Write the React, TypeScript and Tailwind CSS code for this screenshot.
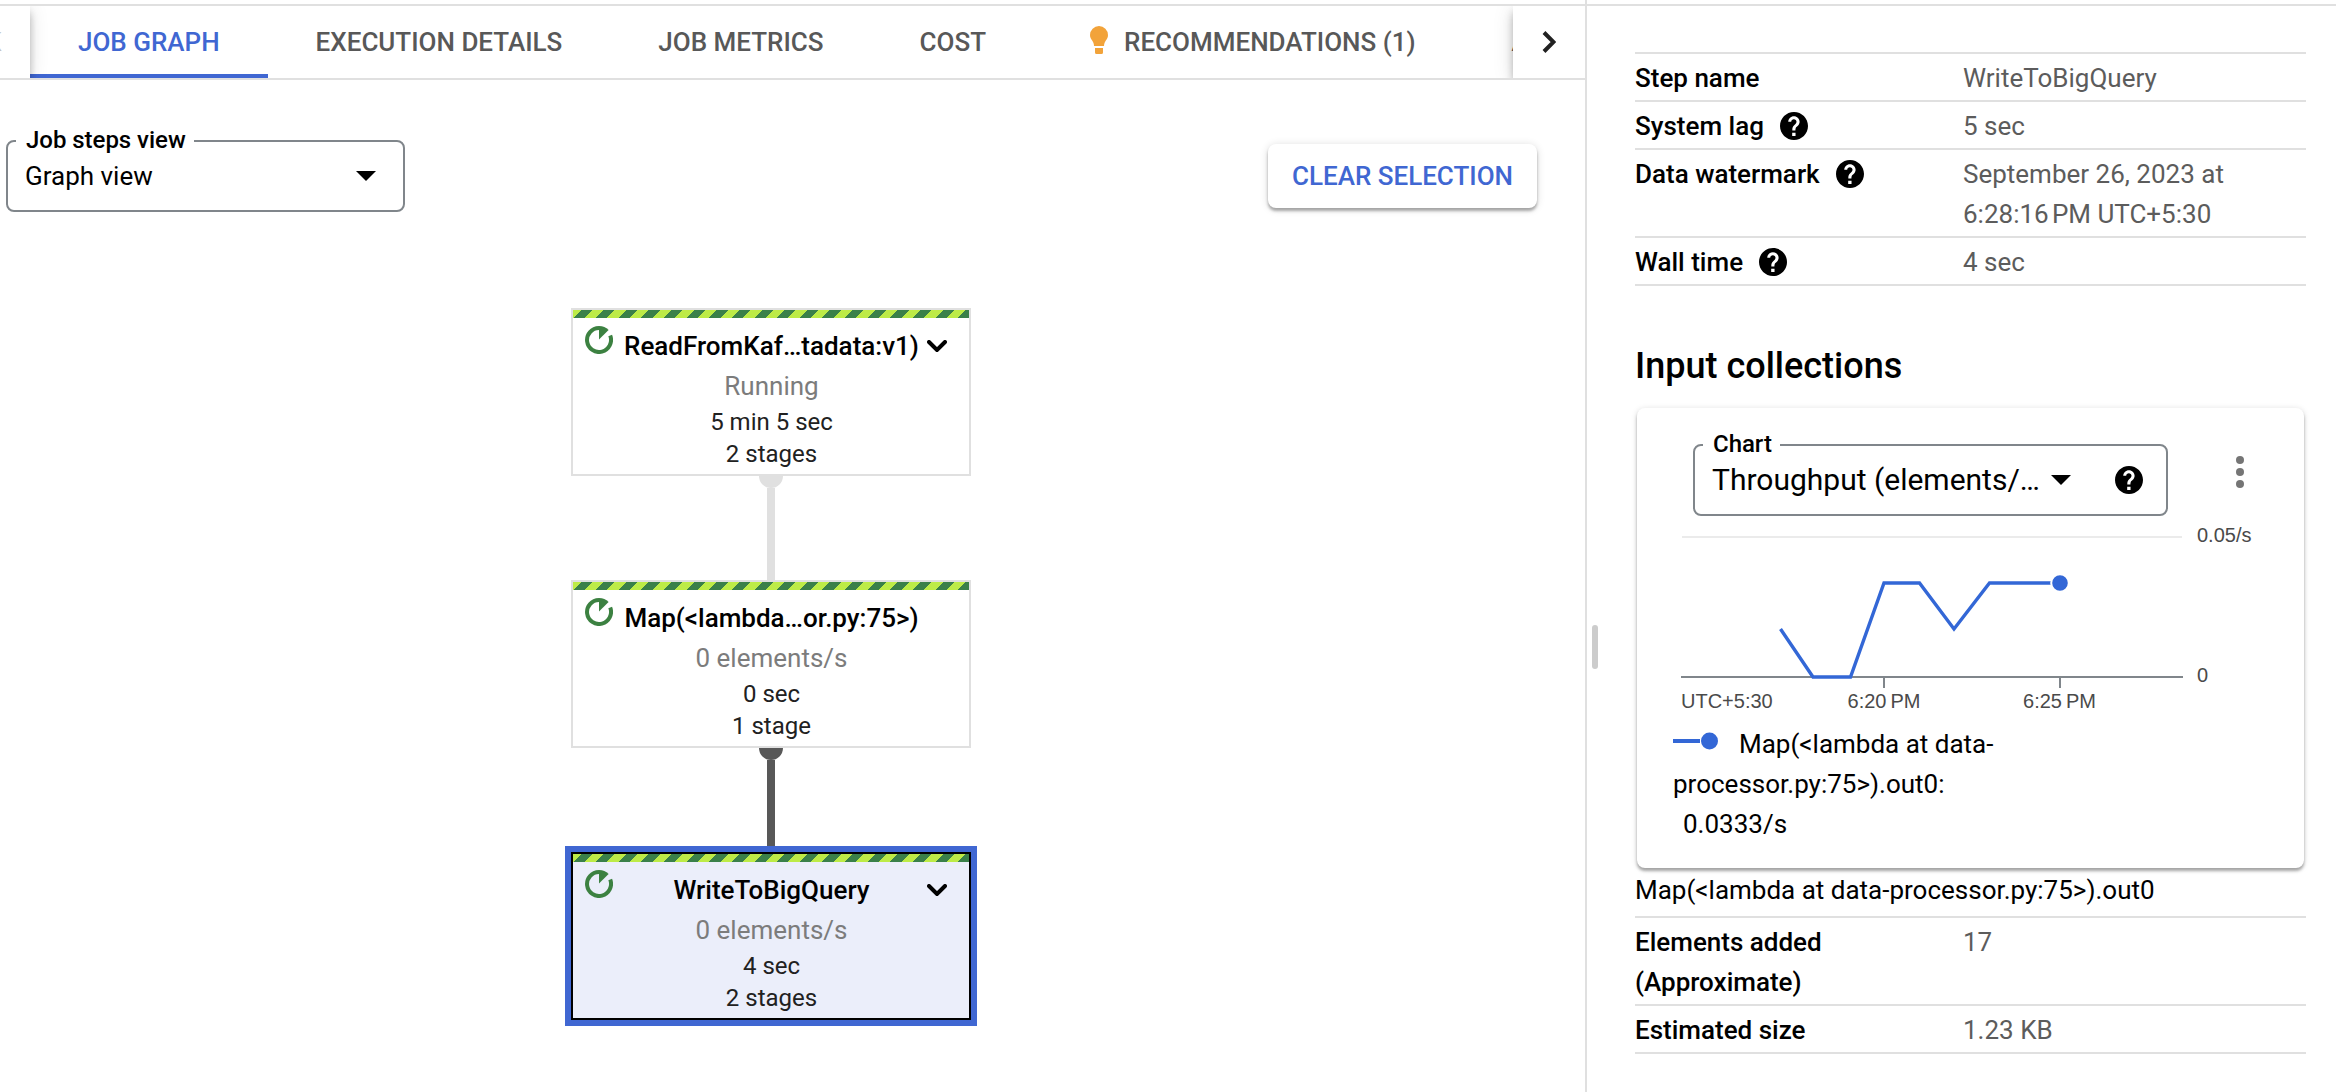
import React from "react";

const HelpIcon = ({ className = "" }: { className?: string }) => (
  <svg viewBox="2 2 20 20" className={`size-7 shrink-0 ${className}`} fill="#000">
    <path d="M12 2C6.48 2 2 6.48 2 12s4.48 10 10 10 10-4.48 10-10S17.52 2 12 2zm1.100 17.200h-2.400v-2.400h2.400v2.400zm2-7.750-.9.92C13.45 12.9 13 13.5 13 15.200h-2.200v-.7c0-1.1.45-2.1 1.17-2.83l1.24-1.26c.37-.36.59-.86.59-1.41 0-1.1-.9-1.800-1.900-1.800s-1.900.7-1.900 1.800H7.900c0-2.21 1.79-4 4.050-4s4.050 1.79 4.050 4c0 .88-.36 1.78-.9 2.45z" />
  </svg>
);

const Caret = ({ className = "" }: { className?: string }) => (
  <svg viewBox="0 0 20 10" className={`h-2.5 w-5 shrink-0 ${className}`}>
    <path d="M0 0h20L10 10z" fill="#000" />
  </svg>
);

const RunningIcon = () => (
  <svg viewBox="0 0 28 28" className="absolute left-3 top-4 size-7">
    <path d="M14 2A12 12 0 1 0 25.2 9.6" fill="none" stroke="#3c8141" strokeWidth="4" />
    <path d="M14 0C18 0 21 1.500 23.600 4L14 13.500z" fill="#3c8141" />
  </svg>
);

type Step = {
  name: string;
  rate: string;
  time: string;
  stages: string;
  expandable?: boolean;
  selected?: boolean;
};

const StepNode = ({ step }: { step: Step }) => (
  <div
    className={`relative h-[168px] w-[400px] border-2 text-center ${
      step.selected
        ? "border-black bg-[#ebeefa] shadow-[0_0_0_6px_#4067d2]"
        : "border-[#e0e0e0] bg-white"
    }`}
  >
    <div className="h-2 bg-[repeating-linear-gradient(-45deg,#3a8049_0px,#3a8049_8px,#bdeb47_8px,#bdeb47_16px)]" />
    <RunningIcon />
    {step.expandable && (
      <svg viewBox="0 0 20 12" className="absolute left-[354px] top-[30px] h-3 w-5">
        <path d="M2 2l8 8 8-8" fill="none" stroke="#000" strokeWidth="4" strokeLinecap="round" />
      </svg>
    )}
    <div className="mt-2 h-10 pl-px text-[26px]/10 font-medium text-black">{step.name}</div>
    <div className="h-10 pl-px text-[26px]/10 text-[#7c7c7c]">{step.rate}</div>
    <div className="h-8 pl-px text-[24px]/8 text-[#212121]">{step.time}</div>
    <div className="h-8 pl-px text-[24px]/8 text-[#212121]">{step.stages}</div>
  </div>
);

const Edge = ({ active = false }: { active?: boolean }) => (
  <div className="flex h-[104px] flex-col items-center">
    <div className={`h-3 w-6 rounded-b-full ${active ? "bg-[#585858]" : "bg-[#e0e0e0]"}`} />
    <div className={`w-2 flex-1 ${active ? "bg-[#585858]" : "bg-[#e0e0e0]"}`} />
  </div>
);

const Tab = ({ active = false, children }: { active?: boolean; children: React.ReactNode }) => (
  <div
    className={`flex h-full shrink-0 items-center whitespace-nowrap border-b-4 px-12 pt-1 text-[26px] font-medium ${
      active ? "border-[#4067d2] text-[#4067d2]" : "border-transparent text-[#585858]"
    }`}
  >
    {children}
  </div>
);

const Row = ({ label, help = false, children }: { label: string; help?: boolean; children: React.ReactNode }) => (
  <div className="flex border-b-2 border-[#e0e0e0] pb-0.5 pt-1 text-[26px]/10">
    <div className="flex w-[328px] shrink-0 items-start pr-20 font-medium text-black">
      {label}
      {help && <HelpIcon className="ml-4 mt-1.5" />}
    </div>
    <div className="whitespace-pre-line text-[#5c5c5c]">{children}</div>
  </div>
);

const steps: Step[] = [
  { name: "ReadFromKaf…tadata:v1)", rate: "Running", time: "5 min 5 sec", stages: "2 stages", expandable: true },
  { name: "Map(<lambda…or.py:75>)", rate: "0 elements/s", time: "0 sec", stages: "1 stage" },
  { name: "WriteToBigQuery", rate: "0 elements/s", time: "4 sec", stages: "2 stages", expandable: true, selected: true },
];

const ThroughputChart = () => (
  <svg viewBox="0 0 640 190" className="ml-9 mt-[14px] h-[190px] w-[640px] overflow-visible">
    <path d="M9 7H509" stroke="#ebebeb" strokeWidth="2" />
    <path d="M8 147H510M211 147v11M387 147v11" stroke="#80868b" strokeWidth="2" />
    <path
      d="M107.500 99L140 147H177.500L211 53H246.500L281 99L316.500 53H387"
      fill="none"
      stroke="#3367d6"
      strokeWidth="3.400"
    />
    <circle cx="387" cy="53" r="8.800" fill="#3367d6" stroke="#fff" strokeWidth="2" />
    <g fontSize="20" fill="#4a4a4a" fontFamily="Liberation Sans, Arial, sans-serif">
      <text x="524" y="12">0.05/s</text>
      <text x="524" y="152">0</text>
      <text x="8" y="178">UTC+5:30</text>
      <text x="211" y="178" textAnchor="middle">{"6:20\u202fPM"}</text>
      <text x="386.500" y="178" textAnchor="middle">{"6:25\u202fPM"}</text>
    </g>
  </svg>
);

export default function App() {
  return (
    <div className="flex h-[1092px] w-[2336px] flex-col overflow-hidden bg-white font-[Roboto,sans-serif] text-black">
      <div className="flex h-1 shrink-0">
        <div className="w-[1585px]" />
        <div className="w-0.5 bg-[#e0e0e0]" />
      </div>
      <div className="h-0.5 shrink-0 bg-[#e0e0e0]" />
      <div className="flex min-h-0 flex-1">
        <main className="flex w-[1585px] shrink-0 flex-col">
          <div className="flex h-[74px] overflow-hidden border-b-2 border-[#e0e0e0]">
            <div className="relative z-10 w-[30px] shrink-0 bg-white shadow-[0_4px_8px_-2px_rgba(0,0,0,0.2),0_8px_10px_0_rgba(0,0,0,0.14),0_2px_20px_0_rgba(0,0,0,0.12)]">
              <div className="flex h-full items-center overflow-hidden pt-px text-[26px] font-medium text-[#c4c4c4]">
                <span className="-ml-[15px]">K</span>
              </div>
            </div>
            <div className="flex w-[1483px] overflow-hidden">
              <Tab active>JOB GRAPH</Tab>
              <Tab>EXECUTION DETAILS</Tab>
              <Tab>JOB METRICS</Tab>
              <Tab>COST</Tab>
              <Tab>
                <svg viewBox="0 0 32 32" className="-mt-1 ml-px mr-[9px] size-8" fill="#f2a33a">
                  <path d="M16 2a9 9 0 0 0-9 9c0 5 4 5.500 4 11h10c0-5.500 4-6 4-11a9 9 0 0 0-9-9zM12 24h8v4.500a1.500 1.500 0 0 1-1.500 1.500h-5a1.500 1.500 0 0 1-1.500-1.500z" />
                </svg>
                RECOMMENDATIONS (1)
              </Tab>
              <Tab>AUTOSCALING</Tab>
            </div>
            <div className="relative z-10 flex flex-1 items-center justify-center bg-white shadow-[0_4px_8px_-2px_rgba(0,0,0,0.2),0_8px_10px_0_rgba(0,0,0,0.14),0_2px_20px_0_rgba(0,0,0,0.12)]">
              <svg viewBox="0 0 14 22" className="h-[22px] w-3.5">
                <path d="M2 1.500l9.500 9.500L2 20.500" fill="none" stroke="#212121" strokeWidth="4" />
              </svg>
            </div>
          </div>
          <div className="flex items-start justify-between pl-1.5 pr-12 pt-[60px]">
            <fieldset className="relative h-[72px] w-[399px] rounded-lg border-2 border-[#80868b]">
              <div className="absolute -top-[18px] left-2 flex h-8 w-[178px] items-center whitespace-nowrap bg-white px-2.5 text-[24px] font-medium tracking-[-0.03px]">
                Job steps view
              </div>
              <div className="flex h-full items-center justify-between pl-[17px] pr-[27px] text-[26px]">
                Graph view
                <Caret />
              </div>
            </fieldset>
            <button className="mt-1 h-16 w-[269px] rounded-lg bg-white text-[26px] font-medium text-[#4067d2] shadow-[0_3px_3px_rgba(0,0,0,0.3),0_1px_8px_rgba(0,0,0,0.14)]">
              CLEAR SELECTION
            </button>
          </div>
          <div className="ml-[571px] mt-24 flex w-[400px] flex-col">
            <StepNode step={steps[0]} />
            <Edge />
            <StepNode step={steps[1]} />
            <Edge active />
            <StepNode step={steps[2]} />
          </div>
        </main>
        <div className="flex w-[50px] shrink-0 items-start border-l-2 border-[#e0e0e0] pl-[5px] pt-[619px]">
          <div className="h-11 w-1.5 rounded-full bg-[#ccc]" />
        </div>
        <aside className="w-[671px] shrink-0 pt-[46px]">
          <div className="border-t-2 border-[#e0e0e0]">
            <Row label="Step name">WriteToBigQuery</Row>
            <Row label="System lag" help>5 sec</Row>
            <Row label="Data watermark" help>{"September 26, 2023 at\n6:28:16\u202fPM UTC+5:30"}</Row>
            <Row label="Wall time" help>4 sec</Row>
          </div>
          <h2 className="mt-[56px] h-12 text-[36px]/12 font-medium">Input collections</h2>
          <section className="mx-0.5 mt-[18px] h-[460px] rounded-lg pt-9 shadow-[0_3px_3px_rgba(0,0,0,0.3),0_1px_6px_rgba(0,0,0,0.14)]">
            <div className="ml-14 flex items-center">
              <fieldset className="relative h-[72px] w-[475px] rounded-lg border-2 border-[#80868b]">
                <div className="absolute -top-[18px] left-2 flex h-8 w-[77px] items-center bg-white px-2.5 text-[24px] font-medium tracking-[-0.03px]">
                  Chart
                </div>
                <div className="flex h-full items-center pl-[17px] text-[30px]">
                  <span className="-mt-0.5 w-[339px] whitespace-nowrap">Throughput (elements/…</span>
                  <Caret />
                  <HelpIcon className="-mt-px ml-11" />
                </div>
              </fieldset>
              <svg viewBox="0 0 8 32" className="-mt-4 ml-[68px] h-8 w-2" fill="#757575">
                <circle cx="4" cy="4" r="4" />
                <circle cx="4" cy="16" r="4" />
                <circle cx="4" cy="28" r="4" />
              </svg>
            </div>
            <ThroughputChart />
            <div className="ml-9 mt-1 w-[400px] text-[26px]/10">
              <svg viewBox="0 0 46 18" className="mr-5 inline-block h-[18px] w-[46px] align-[3px]">
                <path d="M0 9H27" stroke="#3367d6" strokeWidth="4" />
                <circle cx="36.500" cy="9" r="8.500" fill="#3367d6" />
              </svg>
              Map(&lt;lambda at data-
              <br />
              processor.py:75&gt;).out0:
              <div className="pl-2.5">0.0333/s</div>
            </div>
          </section>
          <div className="mt-0.5 h-12 border-b-2 border-[#e0e0e0] text-[26px]/10">
            Map(&lt;lambda at data-processor.py:75&gt;).out0
          </div>
          <Row label="Elements added (Approximate)">17</Row>
          <Row label="Estimated size">1.23 KB</Row>
        </aside>
      </div>
    </div>
  );
}
